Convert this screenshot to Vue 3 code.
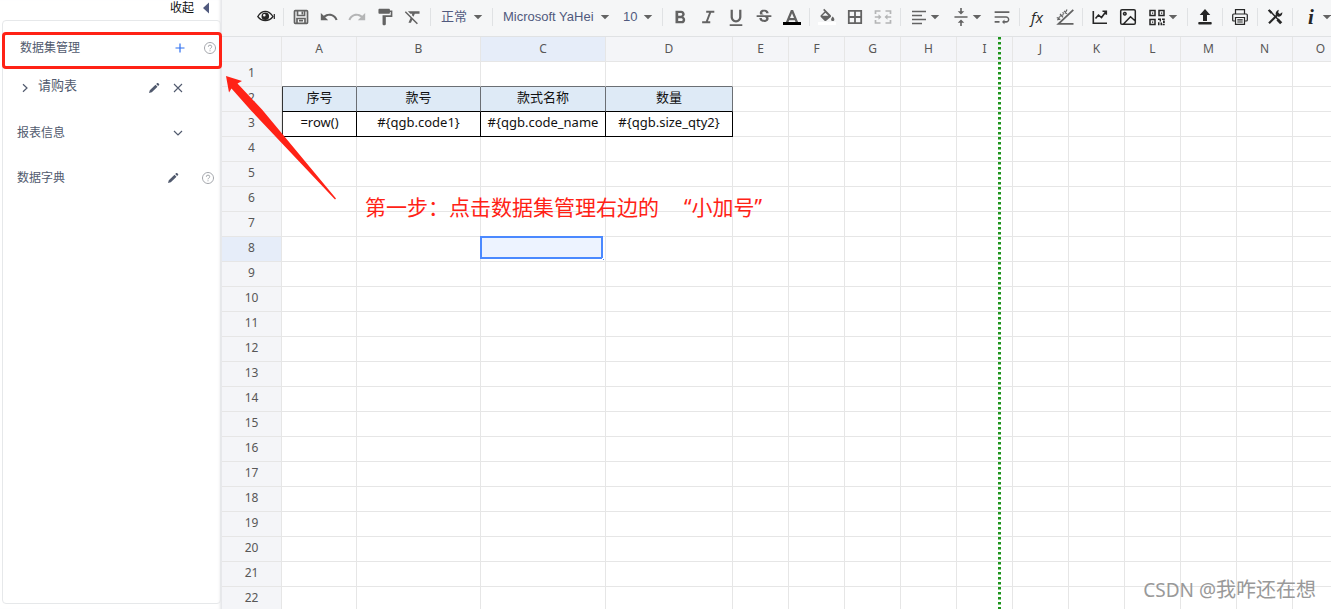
<script setup>
import { h, ref } from 'vue'

const F = (d) => ({ d })
const S = (d, w = 1.5) => ({ d, w })

// view: view box of the drawing; parts: filled or stroked paths
const V18 = '0 0 18 18'
const V24 = '1 1 22 22'
const V12 = '0 0 12 12'
const icons = {
  eye: { view: V18, parts: [S('M.8 8.500C3 5 5.400 3.400 8.300 3.400s5.300 1.600 7.700 5.100c-2.200 2.900-4.700 4.100-7.700 4.100S3 11.400.8 8.500z', 1.3), F('M8.300 4.400a3.800 3.800 0 1 0 0 7.600 3.800 3.800 0 0 0 0-7.600zm-1 1.600a1.300 1.300 0 1 1 0 2.600 1.300 1.300 0 0 1 0-2.600z'), S('M17.300 6v5', 1.200)] },
  save: { view: V18, parts: [S('M3.300 2.700h11.400q.8 0 .8.8v11q0 .8-.8.8H3.300q-.8 0-.8-.8v-11q0-.8.8-.8zM5.500 3v4.500h7V3M5 15v-4.500h8V15M7 12.700h4', 1.7), F('M9.500 3.500h1.500v3H9.500z')] },
  undo: { view: V24, parts: [F('M12.500 8c-2.650 0-5.050.99-6.900 2.600L2 7v9h9l-3.620-3.620c1.390-1.160 3.160-1.880 5.120-1.880 3.540 0 6.550 2.310 7.600 5.500l2.370-.78C21.080 11.030 17.150 8 12.500 8z')] },
  redo: { view: V24, parts: [F('M18.400 10.600C16.550 8.990 14.150 8 11.500 8c-4.650 0-8.580 3.030-9.960 7.220L3.900 16c1.050-3.190 4.050-5.500 7.600-5.500 1.950 0 3.730.72 5.120 1.880L13 16h9V7l-3.600 3.600z')] },
  paint: { view: V24, parts: [F('M18 4V3c0-.55-.45-1-1-1H5c-.55 0-1 .45-1 1v4c0 .55.45 1 1 1h12c.55 0 1-.45 1-1V6h1v4H9v11c0 .55.45 1 1 1h2c.55 0 1-.45 1-1v-9h8V4h-3z')] },
  clear: { view: V24, parts: [F('M3.270 5L2 6.270l6.970 6.970L6.500 19h3l1.570-3.660L16.730 21 18 19.730 3.550 5.270 3.270 5zM6 5v.18L8.820 8h2.400l-.72 1.680 2.100 2.100L14.210 8H20V5H6z')] },
  bold: { view: '2 1 20 20', parts: [F('M15.600 10.790c.97-.67 1.650-1.770 1.650-2.790 0-2.260-1.750-4-4-4H7v14h7.040c2.090 0 3.710-1.700 3.710-3.790 0-1.520-.86-2.820-2.150-3.420zM10 6.500h3c.83 0 1.500.67 1.500 1.500s-.67 1.500-1.500 1.500h-3v-3zm3.500 9H10v-3h3.500c.83 0 1.500.67 1.500 1.500s-.67 1.500-1.500 1.500z')] },
  italic: { view: '2 1 20 20', parts: [F('M10 4v2.300h3.200l-3.600 9.400H5.500V18h9v-2.300h-2.600l3.600-9.400H19V4z')] },
  underline: { view: '2 1 20 20', parts: [F('M12 17c3.310 0 6-2.690 6-6V3h-2.500v8c0 1.930-1.570 3.500-3.500 3.500S8.500 12.930 8.500 11V3H6v8c0 3.310 2.690 6 6 6zm-7 2v2h14v-2H5z')] },
  strike: { view: V24, parts: [F('M7.240 8.750c-.26-.48-.39-1.030-.39-1.670 0-.61.13-1.160.4-1.670.26-.5.63-.93 1.110-1.290.48-.35 1.050-.63 1.700-.83.66-.19 1.390-.29 2.180-.29.81 0 1.540.11 2.210.34.66.22 1.230.54 1.690.94.47.4.83.88 1.080 1.430.25.55.38 1.150.38 1.810h-3.010c0-.31-.05-.59-.15-.85-.09-.27-.24-.49-.44-.68-.2-.19-.45-.33-.75-.44-.3-.1-.66-.16-1.060-.16-.39 0-.74.04-1.030.13-.29.09-.53.21-.72.36-.19.16-.34.34-.44.55-.1.21-.15.43-.15.66 0 .48.25.88.74 1.210.38.25.77.48 1.410.7H7.390c-.05-.08-.11-.17-.15-.25zM21 12v-2H3v2h9.620c.18.07.4.14.55.2.37.17.66.34.87.51.21.17.35.36.43.57.07.2.11.43.11.69 0 .23-.05.45-.14.66-.09.2-.23.38-.42.53-.19.15-.42.26-.71.35-.29.08-.63.13-1.010.13-.43 0-.83-.04-1.180-.13s-.66-.23-.91-.42c-.25-.19-.45-.44-.59-.75-.14-.31-.25-.76-.25-1.210H6.400c0 .55.08 1.130.24 1.580.16.45.37.85.65 1.210.28.35.6.66.98.92.37.26.78.48 1.220.65.44.17.9.3 1.380.39.48.08.96.13 1.440.13.8 0 1.530-.09 2.180-.28s1.210-.45 1.670-.79c.46-.34.82-.77 1.070-1.270s.38-1.070.38-1.710c0-.6-.1-1.140-.31-1.610-.05-.11-.11-.23-.17-.33H21z')] },
  color: { view: '3 0 18 18', parts: [F('M10.900 2L5.500 15h2.600l1.100-2.800h5.600l1.100 2.800h2.600L13.100 2h-2.200zm-.9 8L12 5.200 14 10h-4z')] },
  fill: { view: V24, parts: [F('M16.560 9.940L8.620 2 7.210 3.410l1.880 1.880-4.650 4.650c-.59.59-.59 1.540 0 2.120l4.500 4.500c.29.29.68.44 1.060.44s.77-.15 1.060-.44l5.500-4.500c.59-.58.59-1.530 0-2.120zM6.210 10.500L10 6.710l3.790 3.790H6.210zM19 11.500s-2 2.170-2 3.500c0 1.100.9 2 2 2s2-.9 2-2c0-1.330-2-3.500-2-3.500z')] },
  borders: { view: V18, parts: [S('M2.800 2.800h12.400v12.400H2.800zM9 3v12M3 9h12', 1.8)] },
  merge: { view: V18, parts: [S('M1.500 6V3h5M11.500 3h5v3M1.500 12v3h5M11.500 15h5v-3M.8 9h5M12.200 9h5', 1.7), F('M4.500 6.300L7.500 9l-3 2.700zM13.500 6.300L10.500 9l3 2.700z')] },
  align: { view: V18, parts: [S('M2 3.500h14M2 7.500h10M2 11.500h14M2 15.500h10', 1.7)] },
  valign: { view: V24, parts: [F('M8 19h3v4h2v-4h3l-4-4-4 4zm8-14h-3V1h-2v4H8l4 4 4-4zM4 11v2h16v-2H4z')] },
  wrap: { view: V24, parts: [F('M3 19h6v-2H3v2zM21 5H3v2h18V5zm-4 6H3v2h14.250c1.100 0 2 .9 2 2s-.9 2-2 2H15v-2l-3 3 3 3v-2h2c2.210 0 4-1.790 4-4s-1.790-4-4-4z')] },
  slope: { view: V18, parts: [S('M17.300 1.800L2.500 15.800h15', 1.800), S('M.8 9.500l3.500 2M1.500 12.300l2-3.500M4 5.800l3 3.500M3.600 8.500l4-2M8 2.800l3 3M9 5.500l2-4M6.500 4.500l1.500 1', 1.200)] },
  chart: { view: V18, parts: [S('M2.300 3v12.300H16M4.500 10.500l3-3.500 3 2.500 4.500-6M11.500 3.300h3.800v3.500', 1.600)] },
  image: { view: V18, parts: [S('M3 1.700h12q1.300 0 1.300 1.300v12q0 1.300-1.300 1.300H3q-1.300 0-1.300-1.300V3q0-1.300 1.300-1.300zM4.500 16l7-7.300 4.500 4M5.800 4.500a1.300 1.300 0 1 0 .01 0z', 1.500)] },
  qr: { view: V18, parts: [S('M2 2.500h5v5H2zM11 2.500h5v5h-5zM2 11.500h5v5H2z', 1.500), F('M4 4.500h1.200v1.200H4zM13 4.500h1.200v1.200H13zM4 13.500h1.200v1.200H4zM10 10.500h3v3h-1.400v-1.500H10zM14 10.500h2.800v1.500H14zM15 12.500h1.800v2.500H15zM10 14.200h1.500v3H10zM12.500 14.500H14v2.700h-1.500zM14.500 15.700h2.200v1.500h-2.200z')] },
  upload: { view: V18, parts: [F('M9 1l5.300 6H11v6H7V7H3.700zM3 14h12q.7 0 .7.7v1.100q0 .7-.7.7H3q-.7 0-.7-.7v-1.100q0-.7.7-.7z')] },
  print: { view: V18, parts: [S('M4.500 6V1.700h9V6M4.500 13H2.700q-1 0-1-1V7q0-1 1-1h12.600q1 0 1 1v5q0 1-1 1h-1.800M4.500 9.500h9v6.800h-9zM6.300 11.800h5.400M6.300 14h5.400', 1.200)] },
  tools: { view: V18, parts: [S('M4 3l9 9.500', 1.500), S('M11.500 11.500l3.700 3.700', 3), S('M3 15.300l8-8', 2.200), F('M12.800 1.800a4 4 0 0 0-3 5l2.500 2a4 4 0 0 0 4-4.500l-2.500 1.700-1.600-1.600zM1.800 2.600L3.600 1.300l2.900 3-1.800 1.500z')] },
  caret: { view: '3 3 18 18', parts: [F('M6.500 9.500l5.500 5.500 5.500-5.500z')] },
  plus: { view: V12, parts: [S('M6 1.500v9M1.500 6h9', 1.200)] },
  pencil: { view: V12, parts: [F('M1 11l.8-2.800L7.500 2.700l2 2-5.700 5.500zM8.200 2.100l1-1q.6-.4 1.100.1l.8.8q.4.500 0 1l-1 1z')] },
  close: { view: V12, parts: [S('M2 2l8 8M10 2l-8 8', 1.100)] },
  right: { view: V12, parts: [S('M4 2.200L8 6l-4 3.800', 1.200)] },
  down: { view: V12, parts: [S('M2 4l4 4 4-4', 1.200)] },
  help: { view: V12, parts: [S('M6 .5a5.500 5.500 0 1 0 .01 0zM4.300 4.800q0-1.700 1.700-1.700t1.700 1.500q0 .8-.8 1.400T6 7.300M6 8.300v1', .8)] },
  collapse: { view: V12, parts: [F('M9 .5v11L3 6z')] }
}

const Icon = (props) => {
  const icon = icons[props.name]
  return h('svg', { viewBox: icon.view, 'aria-hidden': 'true' },
    icon.parts.map((p) => h('path', p.w
      ? { d: p.d, fill: 'none', stroke: 'currentColor', 'stroke-width': p.w }
      : { d: p.d, fill: 'currentColor', 'fill-rule': 'evenodd' })))
}
Icon.props = ['name']

const b = (name, label, tone = '') => ({ name, label, tone })
const before = [
  [b('eye', '预览', 'dark')],
  [b('save', '保存'), b('undo', '撤销'), b('redo', '重做', 'muted'), b('paint', '格式刷'), b('clear', '清除格式')]
]
const after = [
  [b('bold', '加粗'), b('italic', '斜体'), b('underline', '下划线'), b('strike', '删除线'), { ...b('color', '文字颜色'), swatch: 'black' }],
  [{ ...b('fill', '填充色'), swatch: 'white' }, b('borders', '边框'), b('merge', '合并', 'muted')],
  [{ ...b('align', '水平对齐'), menu: true }, { ...b('valign', '垂直对齐'), menu: true }, b('wrap', '换行')],
  [{ ...b('', '函数', 'dark'), text: 'fx' }, b('slope', '斜线')],
  [b('chart', '图表', 'dark'), b('image', '图片', 'dark'), { ...b('qr', '二维码', 'dark'), menu: true }],
  [b('upload', '导入', 'dark')],
  [b('print', '打印', 'dark')],
  [b('tools', '设置', 'dark')],
  [{ ...b('', '信息', 'dark'), text: 'i', menu: true }]
]

const format = ref('正常')
const font = ref('Microsoft YaHei')
const size = ref('10')

const columns = 'ABCDEFGHIJKLMNO'.split('')
const rows = Array.from({ length: 22 }, (_, i) => i + 1)
const cells = {
  A2: '序号', B2: '款号', C2: '款式名称', D2: '数量',
  A3: '=row()', B3: '#{qgb.code1}', C3: '#{qgb.code_name', D3: '#{qgb.size_qty2}'
}
const cellClass = (c, r) => {
  const inTable = 'ABCD'.includes(c)
  return {
    above: inTable && r === 1,
    title: inTable && r === 2,
    field: inTable && r === 3,
    first: c === 'A' && (r === 2 || r === 3)
  }
}
</script>

<template>
  <div class="app">
    <aside class="side">
      <button class="fold" type="button">收起<Icon name="collapse" /></button>
      <div class="panel">
        <section class="line marked">
          <span class="name">数据集管理</span>
          <button class="add" type="button" aria-label="新增"><Icon name="plus" /></button>
          <button class="help" type="button" aria-label="帮助"><Icon name="help" /></button>
        </section>
        <section class="line child">
          <button type="button" aria-label="展开"><Icon name="right" /></button>
          <span class="name">请购表</span>
          <button type="button" aria-label="编辑"><Icon name="pencil" /></button>
          <button type="button" aria-label="删除"><Icon name="close" /></button>
        </section>
        <section class="line info">
          <span class="name">报表信息</span>
          <button type="button" aria-label="展开"><Icon name="down" /></button>
        </section>
        <section class="line dict">
          <span class="name">数据字典</span>
          <button type="button" aria-label="编辑"><Icon name="pencil" /></button>
          <button class="help" type="button" aria-label="帮助"><Icon name="help" /></button>
        </section>
      </div>
    </aside>

    <main class="sheet">
      <div class="toolbar">
        <div v-for="(group, g) in before" :key="'b' + g" class="group">
          <button v-for="t in group" :key="t.label" type="button" class="tool" :class="t.tone" :aria-label="t.label">
            <Icon :name="t.name" />
          </button>
        </div>
        <div class="group">
          <label class="pick pick-format"><select v-model="format" aria-label="格式"><option>正常</option></select><Icon name="caret" /></label>
        </div>
        <div class="group">
          <label class="pick pick-font"><select v-model="font" aria-label="字体"><option>Microsoft YaHei</option></select><Icon name="caret" /></label>
          <label class="pick pick-size"><select v-model="size" aria-label="字号"><option>10</option></select><Icon name="caret" /></label>
        </div>
        <div v-for="(group, g) in after" :key="'a' + g" class="group">
          <button v-for="t in group" :key="t.label" type="button" class="tool" :class="[t.tone, { wide: t.menu }]" :aria-label="t.label">
            <span v-if="t.text" class="glyph" :class="'glyph-' + t.text">{{ t.text }}</span>
            <Icon v-else :name="t.name" />
            <Icon v-if="t.menu" class="caret" name="caret" />
            <span v-if="t.swatch" class="swatch" :class="t.swatch"></span>
          </button>
        </div>
      </div>

      <div class="canvas">
        <table class="grid">
          <colgroup>
            <col class="w-index" />
            <col v-for="c in columns" :key="c" :class="'w-' + c" />
          </colgroup>
          <thead>
            <tr>
              <th></th>
              <th v-for="c in columns" :key="c" :class="{ active: c === 'C' }">{{ c }}</th>
            </tr>
          </thead>
          <tbody>
            <tr v-for="r in rows" :key="r">
              <th :class="{ active: r === 8 }">{{ r }}</th>
              <td v-for="c in columns" :key="c" :class="cellClass(c, r)">{{ cells[c + r] }}<span v-if="c + r === 'C8'" class="selection"></span></td>
            </tr>
          </tbody>
        </table>
        <div class="page-edge"></div>
      </div>
    </main>

    <svg class="pointer" viewBox="0 0 112 126" aria-hidden="true">
      <path d="M1 1L17 6L12.500 8.500L37 34.500L111 123.500L110 124.500L26 35.500L6.500 13.500L4 17.500z" fill="#ff2216" />
    </svg>
    <p class="note"><span>第一步：点击数据集管理右边的</span><span>“小加号”</span></p>
    <p class="watermark">CSDN @<span>我咋还在想</span></p>
  </div>
</template>

<style>
body {
  margin: 0;
  overflow: hidden;
}
</style>

<style scoped>
.app {
  position: relative;
  display: flex;
  height: 100vh;
  overflow: hidden;
  background: #fff;
  color: #515a6e;
  font: 12px/18px "Noto Sans", "Noto Sans CJK SC", sans-serif;
}
button {
  display: flex;
  align-items: center;
  justify-content: center;
  padding: 0;
  border: 0;
  background: none;
  color: inherit;
  font: inherit;
}
svg {
  display: block;
  flex: none;
}
.side {
  display: flex;
  flex-direction: column;
  flex: none;
  box-sizing: border-box;
  width: 222px;
  padding: 0 1px 5px 2px;
  box-shadow: inset -4px 0 3px -2px #e4e5e8;
}
.side svg {
  width: 12px;
  height: 12px;
}
.fold {
  align-self: flex-end;
  gap: 6px;
  height: 16px;
  margin: 0 9px 4px 0;
  color: #111;
}
.fold svg {
  color: #515a7e;
}
.panel {
  flex: 1;
  border: 1px solid #e6e8ea;
  border-radius: 4px;
  padding-top: 11px;
}
.line {
  display: flex;
  align-items: center;
  box-sizing: border-box;
}
.name {
  flex: 1;
}
.marked {
  height: 37px;
  margin: 0 -2px 0 -1px;
  padding: 0 3px 5px 15px;
  border: 3px solid #ff2216;
  border-radius: 4px;
}
.add {
  margin-right: 18px;
  color: #2d6ff0;
}
.help {
  color: #8c8f96;
}
.child {
  height: 39px;
  gap: 12px;
  padding: 0 36px 2px 16px;
}
.child .name {
  margin-left: -5px;
  padding-bottom: 6px;
  font-size: 13px;
}
.info {
  height: 50px;
  padding: 0 36px 0 14px;
}
.dict {
  height: 40px;
  gap: 23px;
  padding: 0 6px 0 14px;
}
.sheet {
  flex: 1;
  min-width: 0;
  overflow: hidden;
}
.toolbar {
  display: flex;
  box-sizing: border-box;
  height: 37px;
  padding-left: 30px;
  border-bottom: 1px solid #e0e2e4;
  background: #f5f6f7;
  color: #636363;
}
.group {
  display: flex;
  flex: none;
  align-items: center;
  height: 34px;
}
.group + .group::before {
  content: "";
  width: 1px;
  height: 18px;
  margin: 0 3px;
  background: #e0e2e4;
}
.tool {
  position: relative;
  width: 28px;
  height: 28px;
}
.tool svg {
  width: 18px;
  height: 18px;
}
.tool.wide {
  width: 42px;
  justify-content: flex-start;
  padding-left: 6px;
}
.tool .caret,
.pick svg {
  width: 14px;
  height: 14px;
  color: #636363;
}
.dark {
  color: #262626;
}
.muted {
  color: #b4b5b6;
}
.swatch {
  position: absolute;
  right: 5px;
  bottom: 6px;
  left: 5px;
  height: 3px;
}
.black {
  background: #000;
}
.white {
  background: #fff;
}
.glyph {
  width: 18px;
  text-align: center;
}
.glyph-fx {
  font: italic 15px/18px "Open Sans", sans-serif;
}
.glyph-i {
  font: italic bold 21px/18px "Liberation Serif", serif;
}
.pick {
  display: flex;
  align-items: center;
  box-sizing: border-box;
  padding: 0 4px 0 7px;
}
.pick select {
  flex: 1;
  min-width: 0;
  padding: 0;
  border: 0;
  appearance: none;
  background: none;
  color: #515a7e;
  font: 13px/18px "Liberation Sans", "Noto Sans CJK SC", sans-serif;
}
.pick-format {
  width: 55px;
}
.pick-font {
  width: 120px;
}
.pick-size {
  width: 43px;
}
.canvas {
  position: relative;
}
.grid {
  width: 0;
  table-layout: fixed;
  border-collapse: separate;
  border-spacing: 0;
}
.w-index {
  width: 60px;
}
.w-A {
  width: 75px;
}
.w-B {
  width: 124px;
}
.w-C {
  width: 125px;
}
.w-D {
  width: 127px;
}
col {
  width: 56px;
}
th,
td {
  box-sizing: border-box;
  height: 25px;
  padding: 0 0 2px;
  border: solid #e6e6e6;
  border-width: 0 1px 1px 0;
  overflow: hidden;
  white-space: nowrap;
  text-align: center;
  line-height: 20px;
}
th {
  background: #f4f5f8;
  color: #585757;
  font-weight: 400;
}
thead th {
  padding-bottom: 0;
}
th.active {
  background: #e6edf9;
}
td {
  position: relative;
  overflow: visible;
  color: #111;
  font-size: 13px;
}
td.above {
  border-bottom-color: #6b6f74;
}
td.title {
  padding-bottom: 4px;
  border-right-color: #6b6f74;
  border-bottom-color: #000;
  background: #deeaf6;
}
td.field {
  padding-bottom: 4px;
  border-right-color: #000;
  border-bottom-color: #000;
}
td.first {
  border-left: 1px solid #333;
}
.selection {
  position: absolute;
  inset: -1px 2px 2px -1px;
  border: 2px solid #4b89ff;
  background: rgba(75, 137, 255, 0.1);
}
.selection::after {
  content: "";
  position: absolute;
  right: -4px;
  bottom: -4px;
  width: 1px;
  height: 1px;
  border: 1px solid #fff;
  background: #4b89ff;
}
.page-edge {
  position: absolute;
  top: 0;
  bottom: 0;
  left: 776px;
  width: 3px;
  background: repeating-linear-gradient(#1b931b 0 2px, #8cc88c 2px 3px, transparent 3px 5px);
}
.pointer {
  position: absolute;
  top: 75px;
  left: 225px;
  width: 112px;
  height: 126px;
}
.note {
  position: absolute;
  top: 192px;
  left: 365px;
  display: flex;
  gap: 25px;
  margin: 0;
  color: #ff2216;
  font-size: 21px;
  line-height: 30px;
  white-space: nowrap;
}
.watermark {
  position: absolute;
  right: 15px;
  bottom: 4px;
  margin: 0;
  color: #999;
  font-size: 19px;
  line-height: 30px;
  white-space: nowrap;
}
.watermark span {
  font-size: 20px;
}
</style>
